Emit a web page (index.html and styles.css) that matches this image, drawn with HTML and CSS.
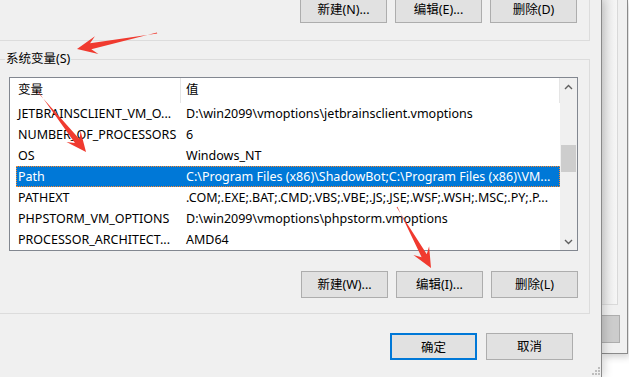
FILE: index.html
```html
<!DOCTYPE html>
<html lang="zh-CN">
<head>
<meta charset="utf-8">
<title>环境变量</title>
<link rel="stylesheet" href="styles.css">
</head>
<body>
<div class="screen">
  <div class="dialog">
    <div class="group user">
      <div class="btnrow">
        <button class="btn">新建(N)...</button>
        <button class="btn">编辑(E)...</button>
        <button class="btn">删除(D)</button>
      </div>
    </div>

    <fieldset class="group sys">
      <legend>系统变量(S)</legend>
      <div class="list">
        <div class="list-main">
          <div class="header">
            <div class="hcell first">变量</div>
            <div class="hcell second">值</div>
          </div>
          <div class="rows">
            <div class="row"><span class="name">JETBRAINSCLIENT_VM_O...</span><span class="val">D:\win2099\vmoptions\jetbrainsclient.vmoptions</span></div>
            <div class="row"><span class="name">NUMBER_OF_PROCESSORS</span><span class="val">6</span></div>
            <div class="row"><span class="name">OS</span><span class="val">Windows_NT</span></div>
            <div class="row selected"><span class="name">Path</span><span class="val">C:\Program Files (x86)\ShadowBot;C:\Program Files (x86)\VM...</span></div>
            <div class="row"><span class="name">PATHEXT</span><span class="val">.COM;.EXE;.BAT;.CMD;.VBS;.VBE;.JS;.JSE;.WSF;.WSH;.MSC;.PY;.P...</span></div>
            <div class="row"><span class="name">PHPSTORM_VM_OPTIONS</span><span class="val">D:\win2099\vmoptions\phpstorm.vmoptions</span></div>
            <div class="row"><span class="name">PROCESSOR_ARCHITECT...</span><span class="val">AMD64</span></div>
          </div>
        </div>
        <div class="scroll">
          <div class="sbtn">
            <svg width="9" height="6" viewBox="0 0 9 6"><polyline points="1,5 4.5,1.5 8,5" fill="none" stroke="#606060" stroke-width="1.4"/></svg>
          </div>
          <div class="track"><div class="thumb"></div></div>
          <div class="sbtn">
            <svg width="9" height="6" viewBox="0 0 9 6"><polyline points="1,1 4.5,4.5 8,1" fill="none" stroke="#606060" stroke-width="1.4"/></svg>
          </div>
        </div>
      </div>
      <div class="btnrow lower">
        <button class="btn">新建(W)...</button>
        <button class="btn">编辑(I)...</button>
        <button class="btn">删除(L)</button>
      </div>
    </fieldset>

    <div class="footer">
      <button class="btn default">确定</button>
      <button class="btn">取消</button>
    </div>

    <svg class="grip" width="8" height="8" viewBox="0 0 8 8">
      <rect x="6" y="0" width="2" height="2" fill="#bdbdbd"/>
      <rect x="3" y="3" width="2" height="2" fill="#bdbdbd"/>
      <rect x="6" y="3" width="2" height="2" fill="#bdbdbd"/>
      <rect x="0" y="6" width="2" height="2" fill="#bdbdbd"/>
      <rect x="3" y="6" width="2" height="2" fill="#bdbdbd"/>
      <rect x="6" y="6" width="2" height="2" fill="#bdbdbd"/>
    </svg>
  </div>

  <div class="behind">
    <div class="bwin">
      <div class="bpanel"></div>
      <div class="bbtn"></div>
    </div>
  </div>

  <svg class="arrows" width="629" height="377" viewBox="0 0 629 377">
    <polygon points="157,32.5 157.2,33.5 90.1,43.3 94.9,36.3 77,49 98.4,53.9 91.3,49.2" fill="#f03a2f"/>
    <polygon points="37.6,92.3 38.4,91.7 74.9,142.9 66.5,142 86,152 80.5,130.8 79.6,139.2" fill="#f03a2f"/>
    <polygon points="396.6,207.2 397.4,206.8 421.6,257.2 413.4,254.9 431,268 429.1,246.2 426.8,254.3" fill="#f03a2f"/>
  </svg>
</div>
</body>
</html>
```

FILE: styles.css
```css
* {
  box-sizing: border-box;
}

html, body {
  margin: 0;
  padding: 0;
  background: #ffffff;
}

body {
  font-family: "Noto Sans", "Noto Sans CJK SC", sans-serif;
  font-size: 12.5px;
  color: #000;
}

.screen {
  position: relative;
  width: 629px;
  height: 377px;
  overflow: hidden;
  display: flex;
}

.dialog {
  position: relative;
  z-index: 1;
  width: 602px;
  height: 377px;
  flex: none;
  background: #f0f0f0;
  border-right: 1px solid #8a8a8a;
  box-shadow: 2px 0 9px rgba(0, 0, 0, 0.18);
  display: flex;
  flex-direction: column;
}

.group {
  margin: 0 0 0 -5px;
  width: 595px;
}

.user {
  border-right: 1px solid #dcdcdc;
  border-bottom: 1px solid #dcdcdc;
  padding: 0 12px 17px 0;
}

.btnrow {
  display: flex;
  justify-content: flex-end;
  gap: 8px;
}

.user .btnrow {
  margin-top: -4px;
}

.btn {
  width: 87px;
  height: 27px;
  padding: 0;
  margin: 0;
  background: #e1e1e1;
  border: 1px solid #adadad;
  font-family: inherit;
  font-size: 12.5px;
  line-height: 25px;
  color: #000;
  text-align: center;
}

.btn.default {
  border: 2px solid #0078d7;
}

.sys {
  margin-top: 10px;
  border: 1px solid #dcdcdc;
  padding: 10px 11px 15px 13px;
  min-inline-size: 0;
}

.sys legend {
  margin-left: -4px;
  padding: 0 1px;
  line-height: 16px;
  font-size: 12.5px;
}

.list {
  height: 174px;
  border: 1px solid #828790;
  background: #fff;
  display: grid;
  grid-template-columns: 1fr 17px;
  overflow: hidden;
}

.list-main {
  overflow: hidden;
}

.header {
  height: 24.5px;
  display: grid;
  grid-template-columns: 171px 1fr;
}

.hcell {
  line-height: 24px;
  border-right: 1px solid #e5e5e5;
  white-space: nowrap;
}

.hcell.first {
  padding-left: 8px;
}

.hcell.second {
  padding-left: 5px;
}

.rows {
  margin-left: 6px;
}

.row {
  height: 21.17px;
  line-height: 21.17px;
  display: grid;
  grid-template-columns: 164px 1fr;
  white-space: nowrap;
}

.row .name {
  padding-left: 2px;
  overflow: hidden;
}

.row .val {
  padding-left: 6px;
  overflow: hidden;
}

.row.selected {
  background: #0078d7;
  color: #fff;
  outline: 1px dotted #ff8728;
  outline-offset: -1px;
}

.scroll {
  background: #f0f0f0;
  display: flex;
  flex-direction: column;
}

.sbtn {
  height: 17px;
  display: flex;
  align-items: center;
  justify-content: center;
  flex: none;
}

.track {
  flex: 1;
}

.thumb {
  margin: 50px 1px 0 1px;
  height: 27px;
  background: #cdcdcd;
}

.lower {
  margin-top: 20px;
}

.footer {
  margin-top: 19px;
  display: flex;
  justify-content: flex-end;
  gap: 9px;
  padding-right: 28px;
}

.grip {
  position: absolute;
  right: 1px;
  bottom: 2px;
}

.behind {
  flex: 1;
  background: #ffffff;
}

.bwin {
  width: 26px;
  height: 354px;
  background: #f0f0f0;
  border-right: 1px solid #8a8a8a;
  border-bottom: 1px solid #8a8a8a;
  box-shadow: 2px 3px 7px rgba(0, 0, 0, 0.18);
}

.bpanel {
  width: 16px;
  height: 305px;
  background: linear-gradient(to right, #e6e6e6, #f6f6f6);
  border-right: 1px solid #d9d9d9;
  border-bottom: 1px solid #d9d9d9;
}

.bbtn {
  margin-top: 10px;
  width: 18px;
  height: 28px;
  background: #cccccc;
  border: 1px solid #adadad;
  border-left: none;
}

.arrows {
  position: absolute;
  left: 0;
  top: 0;
  z-index: 5;
  pointer-events: none;
}
```
